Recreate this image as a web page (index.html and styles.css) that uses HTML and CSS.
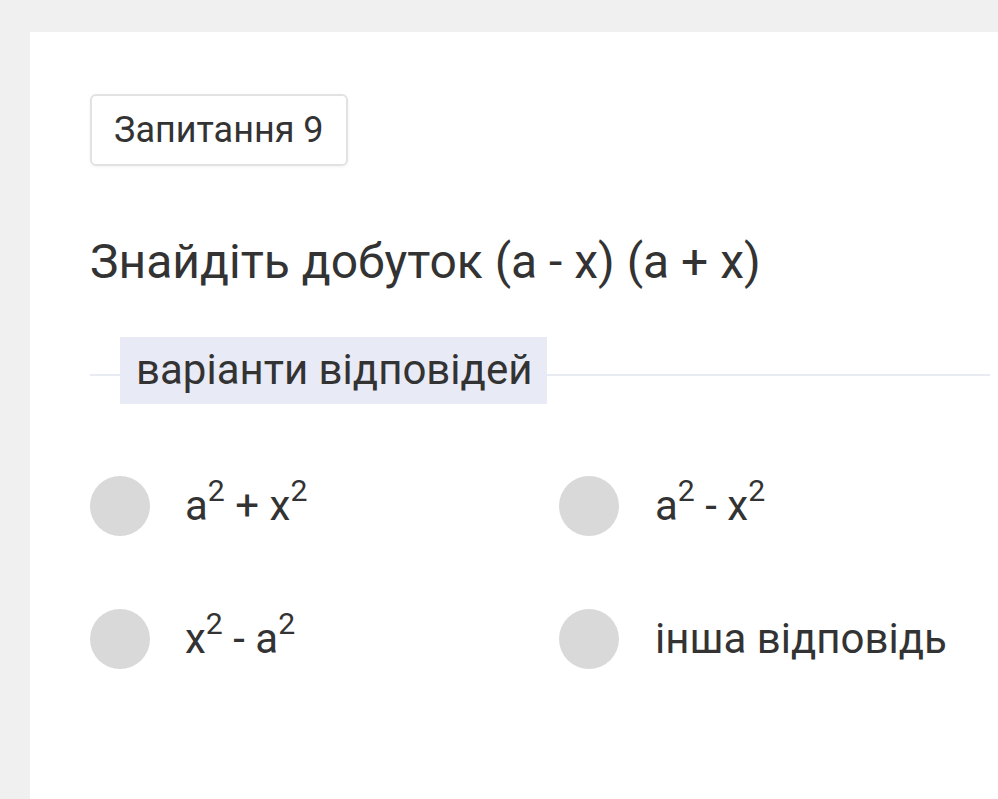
FILE: index.html
```html
<!DOCTYPE html>
<html lang="uk">
<head>
<meta charset="utf-8">
<link rel="stylesheet" href="styles.css">
</head>
<body>
<div class="card">
  <div class="badge">Запитання 9</div>
  <h1 class="question">Знайдіть добуток (а - х) (а + х)</h1>
  <div class="divider">
    <span class="divider-label">варіанти відповідей</span>
  </div>
  <div class="options">
    <div class="option"><span class="radio"></span><span class="opt-text">a<sup>2</sup> + x<sup>2</sup></span></div>
    <div class="option"><span class="radio"></span><span class="opt-text">a<sup>2</sup> - x<sup>2</sup></span></div>
    <div class="option"><span class="radio"></span><span class="opt-text">x<sup>2</sup> - a<sup>2</sup></span></div>
    <div class="option"><span class="radio"></span><span class="opt-text">інша відповідь</span></div>
  </div>
</div>
</body>
</html>
```

FILE: styles.css
```css
html, body {
  margin: 0;
  padding: 0;
  background: #f0f0f0;
  height: 100%;
  overflow: hidden;
}
body {
  padding: 32px 0 0 30px;
  box-sizing: border-box;
  font-family: Roboto, "Noto Sans", sans-serif;
  color: #333333;
}
.card {
  background: #ffffff;
  height: 100%;
  padding: 62px 8px 0 60px;
  box-sizing: border-box;
}
.badge {
  display: inline-block;
  border: 2px solid #e2e2e2;
  border-radius: 6px;
  padding: 0 22px 0 22px;
  height: 72px;
  line-height: 68px;
  box-sizing: border-box;
  font-size: 36px;
  color: #333333;
  box-shadow: 0 1px 3px rgba(0,0,0,0.06);
}
.question {
  margin: 66px 0 0 0;
  font-weight: 400;
  font-size: 48px;
  line-height: 60px;
  color: #333333;
}
.divider {
  margin-top: 45px;
  position: relative;
  display: flex;
  align-items: center;
  height: 67px;
}
.divider::before {
  content: "";
  position: absolute;
  left: 0;
  right: 0;
  top: 37px;
  height: 2px;
  background: #e9ebf2;
}
.divider-label {
  position: relative;
  margin-left: 30px;
  background: #e8eaf6;
  height: 67px;
  line-height: 65px;
  padding: 0 15px 0 16px;
  font-size: 42px;
  color: #333333;
}
.options {
  margin-top: 72px;
  display: grid;
  grid-template-columns: 469px 1fr;
  row-gap: 73px;
}
.option {
  display: flex;
  align-items: center;
  height: 60px;
}
.radio {
  width: 60px;
  height: 60px;
  border-radius: 50%;
  background: #d9d9d9;
  flex: none;
}
.opt-text {
  margin-left: 35px;
  font-size: 42px;
  color: #333333;
  line-height: 60px;
}
.option:nth-child(even) .opt-text {
  margin-left: 36px;
}
sup {
  font-size: 0.72em;
  line-height: 0;
  vertical-align: 0.62em;
}
```
